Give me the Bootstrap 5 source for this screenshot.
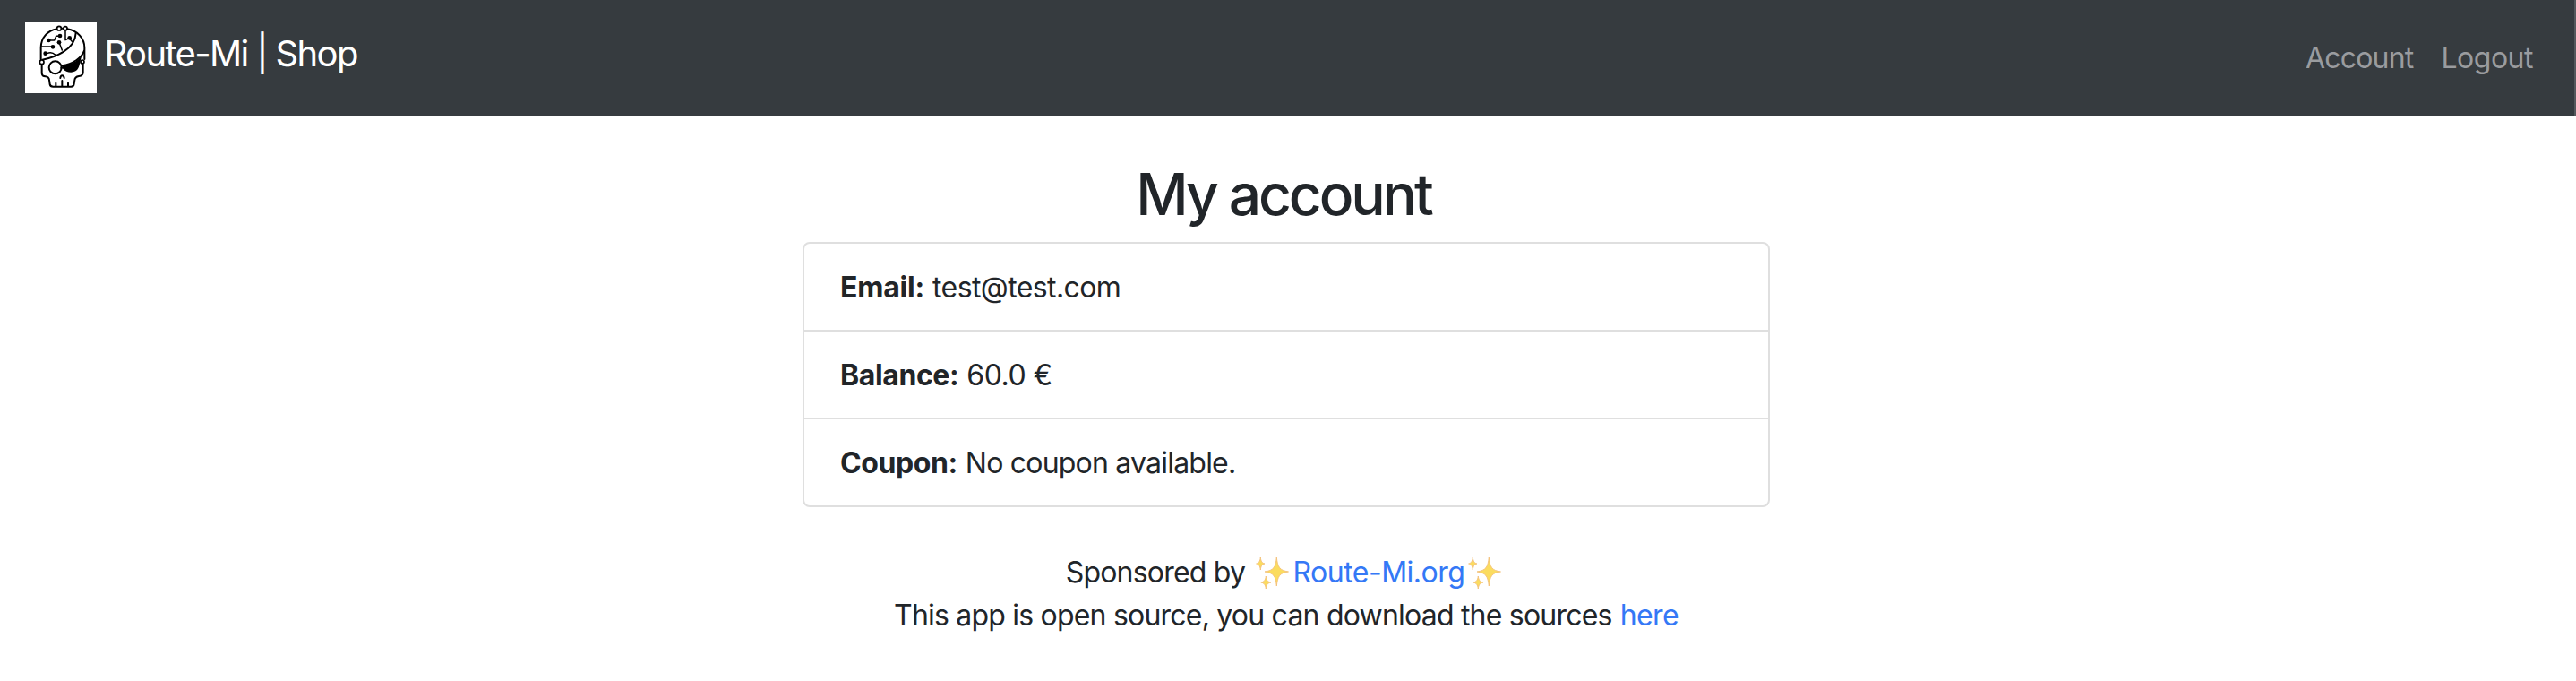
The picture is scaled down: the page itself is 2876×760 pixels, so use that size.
<!DOCTYPE html>
<html lang="en">
<head>
<meta charset="utf-8">
<meta name="viewport" content="width=device-width, initial-scale=1">
<title>Route-Mi | Shop</title>
<link href="https://cdn.jsdelivr.net/npm/bootstrap@5.3.0/dist/css/bootstrap.min.css" rel="stylesheet">
<style>
html{font-size:32px}
body{font-family:Inter,"Liberation Sans",sans-serif;color:#212529;background:#fff;line-height:1.5;overflow:hidden}
.topbar{background:#363b3f;height:130px;padding:0 46px 0 28px;border-right:2px solid #54585c}
.logo-art{margin-top:24px}
.brand-text{font-size:40px;line-height:60px;color:#fff;letter-spacing:-1.62px;margin:30px 0 0 8.5px}
.topbar-links{margin-top:41px;gap:31px}
.topbar .nav-link{color:#9a9c9f;padding:0;font-size:32px;line-height:48px}
.wrap{width:2872px}
.page-title{font-size:64px;font-weight:500;line-height:76.8px;letter-spacing:-3.1px;margin:49px 0 14.2px;padding-right:6px}
.account{width:1080px;--bs-list-group-border-width:2px;--bs-list-group-border-radius:8px}
.account .list-group-item{padding:25px 40px 23px;border-color:#dfdfdf;color:#212529}
.account b{font-weight:700}
.page-foot{margin-top:49px}
.page-foot a{color:#3478f6;text-decoration:none}
.sponsor{height:48px;padding-right:2px}
.spark{width:45px;height:48px}
.t2{letter-spacing:-.2px}
.t4{letter-spacing:-.4px}
.t5{letter-spacing:-.5px}
.t6{letter-spacing:-.6px}
.t8{letter-spacing:-.79px}
</style>
</head>
<body>
<nav class="topbar d-flex justify-content-between align-items-start">
  <a class="d-flex text-decoration-none" href="#">
    <svg class="logo-art" width="80" height="80" viewBox="24 24 240 240" fill="none" stroke="#000" stroke-width="6" stroke-linecap="round" stroke-linejoin="round">
      <path d="M24 24h240v240H24z" fill="#fff" stroke="none"/>
      <path d="M77 151V112C77 78 100 54 131 49M165 49C200 55 223 80 223 112V150"/>
      <path d="M80 168V198Q81 208 92 208Q104 209 105 220L107 234Q108 242 118 242H178Q187 242 188 233L190 220Q191 209 204 207Q218 205 218 194V168"/>
      <path d="M82 152C125 143 192 118 194 62M222 122C214 146 184 166 147 172"/>
      <path d="M147 172C175 168 198 158 213 140L209 156C206 172 203 184 193 190C181 198 159 194 151 182Z" fill="#000" stroke="none"/>
      <path d="M145 179L156 178"/>
      <circle cx="125" cy="178" r="21"/>
      <circle cx="80" cy="160" r="7" fill="#fff" stroke-width="5"/>
      <circle cx="216" cy="159" r="6" fill="#fff" stroke-width="5"/>
      <path d="M145 47H153"/>
      <circle cx="138" cy="47" r="7" fill="#fff" stroke-width="5"/>
      <circle cx="159" cy="47" r="6" fill="#fff" stroke-width="5"/>
      <path d="M127 230V240M148 222V240M168 230V240M142 213Q143 205 148 205Q154 205 155 213"/>
      <path stroke-width="4.5" d="M104 87H122L128 73H141M80 108H117M92 131H98Q112 123 126 136M138 94L148 120M159 53V86L172 80M172 80L181 91"/>
      <g fill="#000" stroke="none"><circle cx="103" cy="87" r="7"/><circle cx="141" cy="72" r="7"/><circle cx="117" cy="109" r="7"/><circle cx="92" cy="131" r="7"/><circle cx="138" cy="94" r="7"/><circle cx="173" cy="79" r="7"/></g>
    </svg>
    <span class="brand-text">Route-Mi | Shop</span>
  </a>
  <div class="d-flex topbar-links">
    <a class="nav-link t8" href="#">Account</a>
    <a class="nav-link t5" href="#">Logout</a>
  </div>
</nav>
<main class="wrap">
  <h2 class="page-title text-center">My account</h2>
  <ul class="list-group account mx-auto">
    <li class="list-group-item"><b class="t2">Email:</b> <span class="t6">test@test.com</span></li>
    <li class="list-group-item"><b class="t4">Balance:</b> <span class="t5">60.0 €</span></li>
    <li class="list-group-item"><b class="t4">Coupon:</b> <span class="t8">No coupon available.</span></li>
  </ul>
</main>
<footer class="wrap page-foot text-center">
  <div class="sponsor d-flex justify-content-center">
    <span class="t8">Sponsored by&nbsp;</span>
    <svg class="spark" viewBox="0 0 45 48">
      <defs>
        <g id="stars" fill="#fbdc5f" stroke="#f3bf79" stroke-width=".9" stroke-linejoin="round">
          <path d="M27.3 7C28.5 18 30.5 21.500 40.500 23C30.500 24.500 28.500 28 27.300 39C26.100 28 24.100 24.500 14 23C24.100 21.500 26.100 18 27.300 7Z"/>
          <path d="M9.300 7C9.800 11.500 11 13.300 14 14C11 14.700 9.800 16.500 9.300 21C8.800 16.500 7.500 14.700 4.600 14C7.500 13.300 8.800 11.500 9.300 7Z"/>
          <path d="M15.300 28C15.900 32.500 17.300 34.300 21 35C17.300 35.700 15.900 37.500 15.300 42C14.700 37.500 13.300 35.700 9.800 35C13.300 34.300 14.700 32.500 15.300 28Z"/>
        </g>
      </defs>
      <use href="#stars"/>
    </svg>
    <a class="t5" href="#">Route-Mi.org</a>
    <svg class="spark" viewBox="0 0 45 48"><use href="#stars"/></svg>
  </div>
  <div><span class="t8">This app is open source, you can download the sources</span> <a class="t6" href="#">here</a></div>
</footer>
<script src="https://cdn.jsdelivr.net/npm/bootstrap@5.3.0/dist/js/bootstrap.bundle.min.js"></script>
</body>
</html>
